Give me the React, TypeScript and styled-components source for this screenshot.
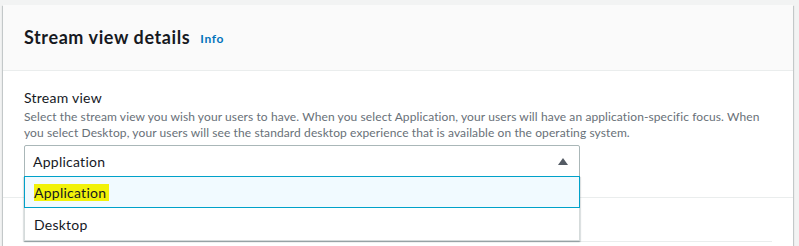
import React from "react";
import styled, { createGlobalStyle } from "styled-components";

const Global = createGlobalStyle`
  html, body { margin: 0; padding: 0; background: #f2f3f3; }
  body { font-family: Lato, "Liberation Sans", Arial, sans-serif; color: #16191f; }
  * { box-sizing: border-box; }
`;

const Page = styled.div`
  padding: 5px 6px 0 3px;
  height: 246px;
  overflow: hidden;
`;

const Card = styled.section`
  background: #ffffff;
  box-shadow: 0 1px 1px 0 rgba(0, 28, 36, 0.3), 1px 1px 1px 0 rgba(0, 28, 36, 0.15),
    -1px 1px 1px 0 rgba(0, 28, 36, 0.15);
  min-height: 260px;
`;

const Header = styled.header`
  background: #fafafa;
  border-bottom: 1px solid #eaeded;
  height: 66px;
  padding: 0 21px 2px;
  display: flex;
  align-items: center;
  gap: 10px;
`;

const Title = styled.h2`
  margin: 0;
  font-size: 18px;
  font-weight: 700;
  line-height: 22px;
  letter-spacing: 0.6px;
  color: #16191f;
`;

const InfoLink = styled.a`
  font-size: 12px;
  font-weight: 700;
  letter-spacing: 0.6px;
  color: #0073bb;
  text-decoration: none;
  margin-top: 3px;
`;

const Body = styled.div`
  padding: 17px 21px 20px;
  border-bottom: 1px solid #eaeded;
`;

const Label = styled.label`
  display: block;
  font-size: 14px;
  line-height: 20px;
  letter-spacing: 0.25px;
  color: #16191f;
`;

const Description = styled.p`
  margin: 0 0 4px;
  padding-top: 1px;
  font-size: 12px;
  line-height: 16px;
  letter-spacing: 0.1px;
  color: #687078;
  max-width: 740px;
`;

const SelectWrap = styled.div`
  position: relative;
  width: 556px;
`;

const Trigger = styled.button`
  width: 100%;
  height: 32px;
  display: flex;
  align-items: center;
  justify-content: space-between;
  padding: 0 11px 0 8px;
  background: #ffffff;
  border: 1px solid #aab7b8;
  border-radius: 2px 2px 0 0;
  font: inherit;
  font-size: 14px;
  letter-spacing: 0.25px;
  color: #16191f;
  text-align: left;
`;

const Menu = styled.ul`
  position: absolute;
  top: 31px;
  left: 0;
  right: 0;
  margin: 0;
  padding: 0;
  list-style: none;
  background: #ffffff;
  border: 1px solid #d5dbdb;
  border-top: none;
  box-shadow: 0 1px 1px 0 rgba(0, 28, 36, 0.2), 1px 1px 1px 0 rgba(0, 28, 36, 0.1),
    -1px 1px 1px 0 rgba(0, 28, 36, 0.1);
  z-index: 2;
`;

const Option = styled.li<{ $active?: boolean }>`
  height: 32px;
  display: flex;
  align-items: center;
  margin: ${(p) => (p.$active ? "0 -1px" : "0")};
  padding: 0 8px 0 ${(p) => (p.$active ? "9px" : "8px")};
  font-size: 14px;
  letter-spacing: 0.25px;
  color: #16191f;
  background: ${(p) => (p.$active ? "#f1faff" : "#ffffff")};
  border: 1px solid ${(p) => (p.$active ? "#00a1c9" : "transparent")};
`;

const Mark = styled.mark`
  background: #f2f20a;
  color: #16191f;
  padding: 0 3px 0 0;
`;

const Footer = styled.div`
  padding: 0 21px;
`;

const FooterRow = styled.div`
  height: 44px;
  border-bottom: 1px solid #eaeded;
`;

const Caret = () => (
  <svg width="10" height="7" viewBox="0 0 10 7" aria-hidden="true">
    <path d="M0 7 L5 0 L10 7 Z" fill="#545b64" />
  </svg>
);

export default function App() {
  return (
    <>
      <Global />
      <Page>
        <Card>
          <Header>
            <Title>Stream view details</Title>
            <InfoLink href="#">Info</InfoLink>
          </Header>
          <Body>
            <Label>Stream view</Label>
            <Description>
              Select the stream view you wish your users to have. When you select Application, your
              users will have an application-specific focus. When you select Desktop, your users
              will see the standard desktop experience that is available on the operating system.
            </Description>
            <SelectWrap>
              <Trigger type="button">
                <span>Application</span>
                <Caret />
              </Trigger>
              <Menu>
                <Option $active>
                  <Mark>Application</Mark>
                </Option>
                <Option>Desktop</Option>
              </Menu>
            </SelectWrap>
          </Body>
          <Footer>
            <FooterRow />
          </Footer>
        </Card>
      </Page>
    </>
  );
}
